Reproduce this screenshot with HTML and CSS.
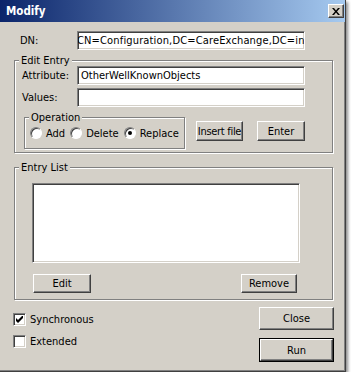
FILE: index.html
```html
<!DOCTYPE html>
<html lang="en">
<head>
    <meta charset="UTF-8">
    <title>Modify</title>
    <link rel="stylesheet" href="styles.css">
</head>
<body>
    <div class="window">
        <div class="titlebar">
            <span class="title">Modify</span>
            <span class="close-btn">
                <svg width="8" height="7" viewBox="0 0 8 7">
                    <path d="M0 0h2l2 2.5L6 0h2L5 3.5 8 7H6L4 4.5 2 7H0l3-3.5z" fill="#000"/>
                </svg>
            </span>
        </div>

        <div class="content">
            <div class="row dn-row">
                <span class="lbl dn-lbl">DN:</span>
                <div class="field"><span class="scrolled">CN=Configuration,DC=CareExchange,DC=in</span></div>
            </div>

            <!-- Edit Entry -->
            <div class="group edit-group">
                <div class="group-title">Edit Entry</div>
                <div class="row">
                    <span class="lbl">Attribute:</span>
                    <div class="field">OtherWellKnownObjects</div>
                </div>
                <div class="row values-row">
                    <span class="lbl">Values:</span>
                    <div class="field"></div>
                </div>
                <div class="op-row">
                    <div class="group op-group">
                        <div class="group-title">Operation</div>
                        <div class="radios">
                            <label class="radio-item"><span class="radio"></span>Add</label>
                            <label class="radio-item"><span class="radio"></span>Delete</label>
                            <label class="radio-item"><span class="radio checked"></span>Replace</label>
                        </div>
                    </div>
                    <button class="btn insert-btn">Insert file</button>
                    <button class="btn enter-btn">Enter</button>
                </div>
            </div>

            <!-- Entry List -->
            <div class="group list-group">
                <div class="group-title">Entry List</div>
                <div class="listbox"></div>
                <div class="list-buttons">
                    <button class="btn edit-btn">Edit</button>
                    <button class="btn remove-btn">Remove</button>
                </div>
            </div>

            <div class="bottom">
                <div class="checks">
                    <label class="check-item">
                        <span class="checkbox">
                            <svg width="7" height="7" viewBox="0 0 7 7">
                                <path d="M0 2v3l2 2 5-5V-1L2 4z" fill="#000"/>
                            </svg>
                        </span>Synchronous
                    </label>
                    <label class="check-item"><span class="checkbox"></span>Extended</label>
                </div>
                <div class="actions">
                    <button class="btn action-btn">Close</button>
                    <div class="default-ring"><button class="btn action-btn">Run</button></div>
                </div>
            </div>
        </div>
    </div>
</body>
</html>
```

FILE: styles.css
```css
/* Couleurs Windows classique */
:root {
    --face: #d4d0c8;
    --shadow: #808080;
    --dark: #404040;
    --light: #ffffff;
}

* {
    margin: 0;
    padding: 0;
    box-sizing: border-box;
}

body {
    background: #ffffff;
    font-family: "DejaVu Sans Condensed", "DejaVu Sans", sans-serif;
    font-size: 11px;
    color: #000;
}

/* Fenêtre */
.window {
    width: 346px;
    height: 372px;
    background: var(--face);
    border-right: 1px solid var(--dark);
    border-bottom: 1px solid var(--dark);
    box-shadow: inset -1px -1px 0 var(--shadow), 2px 2px 3px rgba(0,0,0,0.45);
}

.titlebar {
    height: 22px;
    display: flex;
    align-items: center;
    justify-content: space-between;
    padding: 0 1px 0 6px;
    background: linear-gradient(to right, #0a246a, #a6caf0);
}

.title {
    color: #fff;
    font-weight: bold;
    font-size: 11.5px;
}

.close-btn {
    width: 16px;
    height: 14px;
    display: flex;
    align-items: center;
    justify-content: center;
    background: var(--face);
    border: 1px solid;
    border-color: var(--light) var(--dark) var(--dark) var(--light);
    box-shadow: inset -1px -1px 0 var(--shadow);
}

.content {
    padding: 9px 0 0 14px;
}

/* Lignes label + champ */
.row {
    display: flex;
    align-items: center;
    height: 19px;
    padding-left: 7px;
}

.lbl {
    width: 55px;
}

.dn-row {
    padding-left: 6px;
}

.dn-lbl {
    width: 57px;
}

.values-row {
    margin-top: 3px;
}

.field {
    width: 228px;
    height: 19px;
    background: #fff;
    border: 1px solid;
    border-color: var(--shadow) var(--light) var(--light) var(--shadow);
    box-shadow: inset 1px 1px 0 var(--dark), inset -1px -1px 0 var(--face);
    padding: 0 3px;
    line-height: 17px;
    white-space: nowrap;
    overflow: hidden;
}

.scrolled {
    display: inline-block;
    margin-left: -4px;
    letter-spacing: 0.15px;
}

/* Cadres de groupe */
.group {
    border: 1px solid var(--shadow);
    box-shadow: inset 1px 1px 0 var(--light), 1px 1px 0 var(--light);
}

.group-title {
    width: fit-content;
    margin: -7px 0 -1px 4px;
    padding: 0 2px;
    line-height: 13px;
    background: var(--face);
}

.edit-group {
    width: 319px;
    height: 93px;
    margin-top: 10px;
}

.op-row {
    display: flex;
    align-items: flex-start;
    margin-top: 10px;
}

.op-group {
    width: 161px;
    height: 32px;
    margin-left: 9px;
}

.radios {
    display: flex;
    align-items: center;
    height: 20px;
    padding-left: 5px;
    gap: 5px;
}

.radio-item {
    display: flex;
    align-items: center;
    gap: 4px;
}

.radio {
    width: 12px;
    height: 12px;
    border-radius: 50%;
    background: #fff;
    border: 1px solid;
    border-color: var(--shadow) var(--light) var(--light) var(--shadow);
    box-shadow: inset 1px 1px 0 var(--dark);
    display: flex;
    align-items: center;
    justify-content: center;
}

.radio.checked::after {
    content: '';
    width: 4px;
    height: 4px;
    border-radius: 50%;
    background: #000;
}

/* Boutons */
.btn {
    font: inherit;
    color: #000;
    background: var(--face);
    border: 1px solid;
    border-color: var(--light) var(--dark) var(--dark) var(--light);
    box-shadow: inset -1px -1px 0 var(--shadow);
    padding: 0;
    height: 20px;
    white-space: nowrap;
    overflow: visible;
}

.insert-btn {
    width: 47px;
    margin: 4px 0 0 11px;
    letter-spacing: -0.3px;
}

.enter-btn {
    width: 48px;
    margin: 4px 0 0 14px;
}

/* Liste */
.list-group {
    width: 319px;
    height: 133px;
    margin-top: 14px;
}

.listbox {
    width: 268px;
    height: 80px;
    margin: 10px 0 0 17px;
    background: #fff;
    border: 1px solid;
    border-color: var(--shadow) var(--light) var(--light) var(--shadow);
    box-shadow: inset 1px 1px 0 var(--dark), inset -1px -1px 0 var(--face);
}

.list-buttons {
    display: flex;
    justify-content: space-between;
    width: 264px;
    margin: 11px 0 0 18px;
}

.edit-btn {
    width: 58px;
    height: 19px;
}

.remove-btn {
    width: 56px;
    height: 19px;
}

/* Bas de la fenêtre */
.bottom {
    display: flex;
    margin-top: 7px;
    padding-right: 11px;
}

.checks {
    display: flex;
    flex-direction: column;
    gap: 9px;
    padding-top: 6px;
    margin-left: -1px;
}

.check-item {
    display: flex;
    align-items: center;
    gap: 4px;
    height: 13px;
}

.checkbox {
    width: 13px;
    height: 13px;
    background: #fff;
    border: 1px solid;
    border-color: var(--shadow) var(--light) var(--light) var(--shadow);
    box-shadow: inset 1px 1px 0 var(--dark), inset -1px -1px 0 var(--face);
    display: flex;
    align-items: center;
    justify-content: center;
}

.actions {
    margin-left: auto;
    display: flex;
    flex-direction: column;
    gap: 8px;
}

.action-btn {
    width: 75px;
    height: 23px;
}

.default-ring {
    border: 1px solid #000;
    width: 75px;
    height: 24px;
}

.default-ring .action-btn {
    width: 73px;
    height: 22px;
}
```
